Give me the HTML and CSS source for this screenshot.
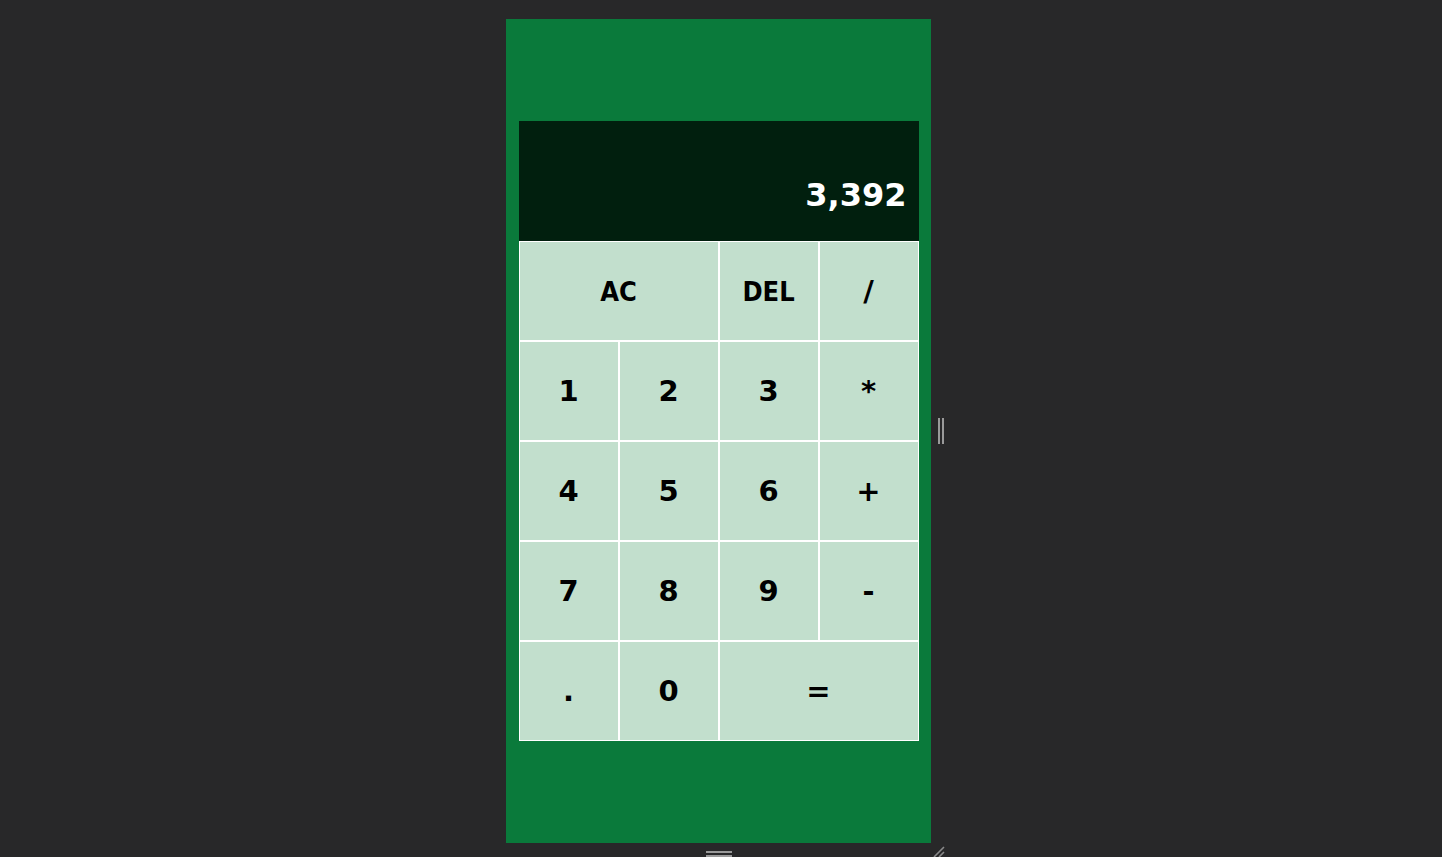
FILE: index.html
```html
<!DOCTYPE html>
<html lang="en">
<head>
<meta charset="utf-8">
<title>Calculator</title>
<link rel="stylesheet" href="styles.css">
</head>
<body>
<div class="stage">
  <div class="frame">
    <div class="calculator">
      <div class="output">
        <div class="previous"></div>
        <div class="current">3,392</div>
      </div>
      <button class="key span-two cond">AC</button>
      <button class="key cond">DEL</button>
      <button class="key">/</button>
      <button class="key">1</button>
      <button class="key">2</button>
      <button class="key">3</button>
      <button class="key">*</button>
      <button class="key">4</button>
      <button class="key">5</button>
      <button class="key">6</button>
      <button class="key">+</button>
      <button class="key">7</button>
      <button class="key">8</button>
      <button class="key">9</button>
      <button class="key">-</button>
      <button class="key">.</button>
      <button class="key">0</button>
      <button class="key span-two">=</button>
    </div>
  </div>
  <div class="handle-v"><span></span><span></span></div>
  <div class="handle-h"><span></span><span></span></div>
  <div class="corner">
    <svg width="14" height="12" viewBox="0 0 14 12"><path d="M3 12 L13 2 M8 12 L13 7" stroke="#8a8a8a" stroke-width="1.6" fill="none"/></svg>
  </div>
</div>
</body>
</html>
```
FILE: styles.css
```css
html, body {
  margin: 0;
  padding: 0;
  height: 100%;
  overflow: hidden;
}
body {
  background: #282829;
  font-family: "DejaVu Sans", "Liberation Sans", sans-serif;
}
.stage {
  display: grid;
  grid-template-columns: 425px 14px;
  grid-template-rows: 824px 14px;
  padding: 19px 0 0 506px;
}
.frame {
  background: #0a7a3b;
  display: flex;
  align-items: center;
  justify-content: center;
}
.calculator {
  display: grid;
  grid-template-columns: repeat(4, 100px);
  grid-template-rows: 120px repeat(5, 100px);
}
.output {
  grid-column: 1 / -1;
  background: #011f0e;
  color: #fff;
  display: flex;
  flex-direction: column;
  align-items: flex-end;
  justify-content: flex-end;
  padding: 0 12px 27px;
  box-sizing: border-box;
}
.current {
  font-size: 32px;
  font-weight: bold;
}
.key {
  border: 1px solid #fff;
  background: #c2dfcd;
  color: #000;
  font-family: "DejaVu Sans", sans-serif;
  font-weight: bold;
  font-size: 29px;
  padding: 0;
  margin: 0;
  display: flex;
  align-items: center;
  justify-content: center;
  box-sizing: border-box;
}
.cond {
  font-family: "DejaVu Sans Condensed", "DejaVu Sans", sans-serif;
  font-stretch: condensed;
  font-size: 27px;
}
.span-two {
  grid-column: span 2;
}
.handle-v {
  display: flex;
  align-items: center;
  gap: 2px;
  padding-left: 7px;
}
.handle-v span {
  width: 2px;
  height: 26px;
  background: #9a9a9a;
}
.handle-h {
  display: flex;
  flex-direction: column;
  align-items: center;
  gap: 2px;
  padding-top: 8px;
}
.handle-h span {
  width: 26px;
  height: 2px;
  background: #9a9a9a;
}
.corner {
  display: flex;
  align-items: flex-end;
  padding-top: 4px;
}
.corner svg {
  display: block;
}
```
